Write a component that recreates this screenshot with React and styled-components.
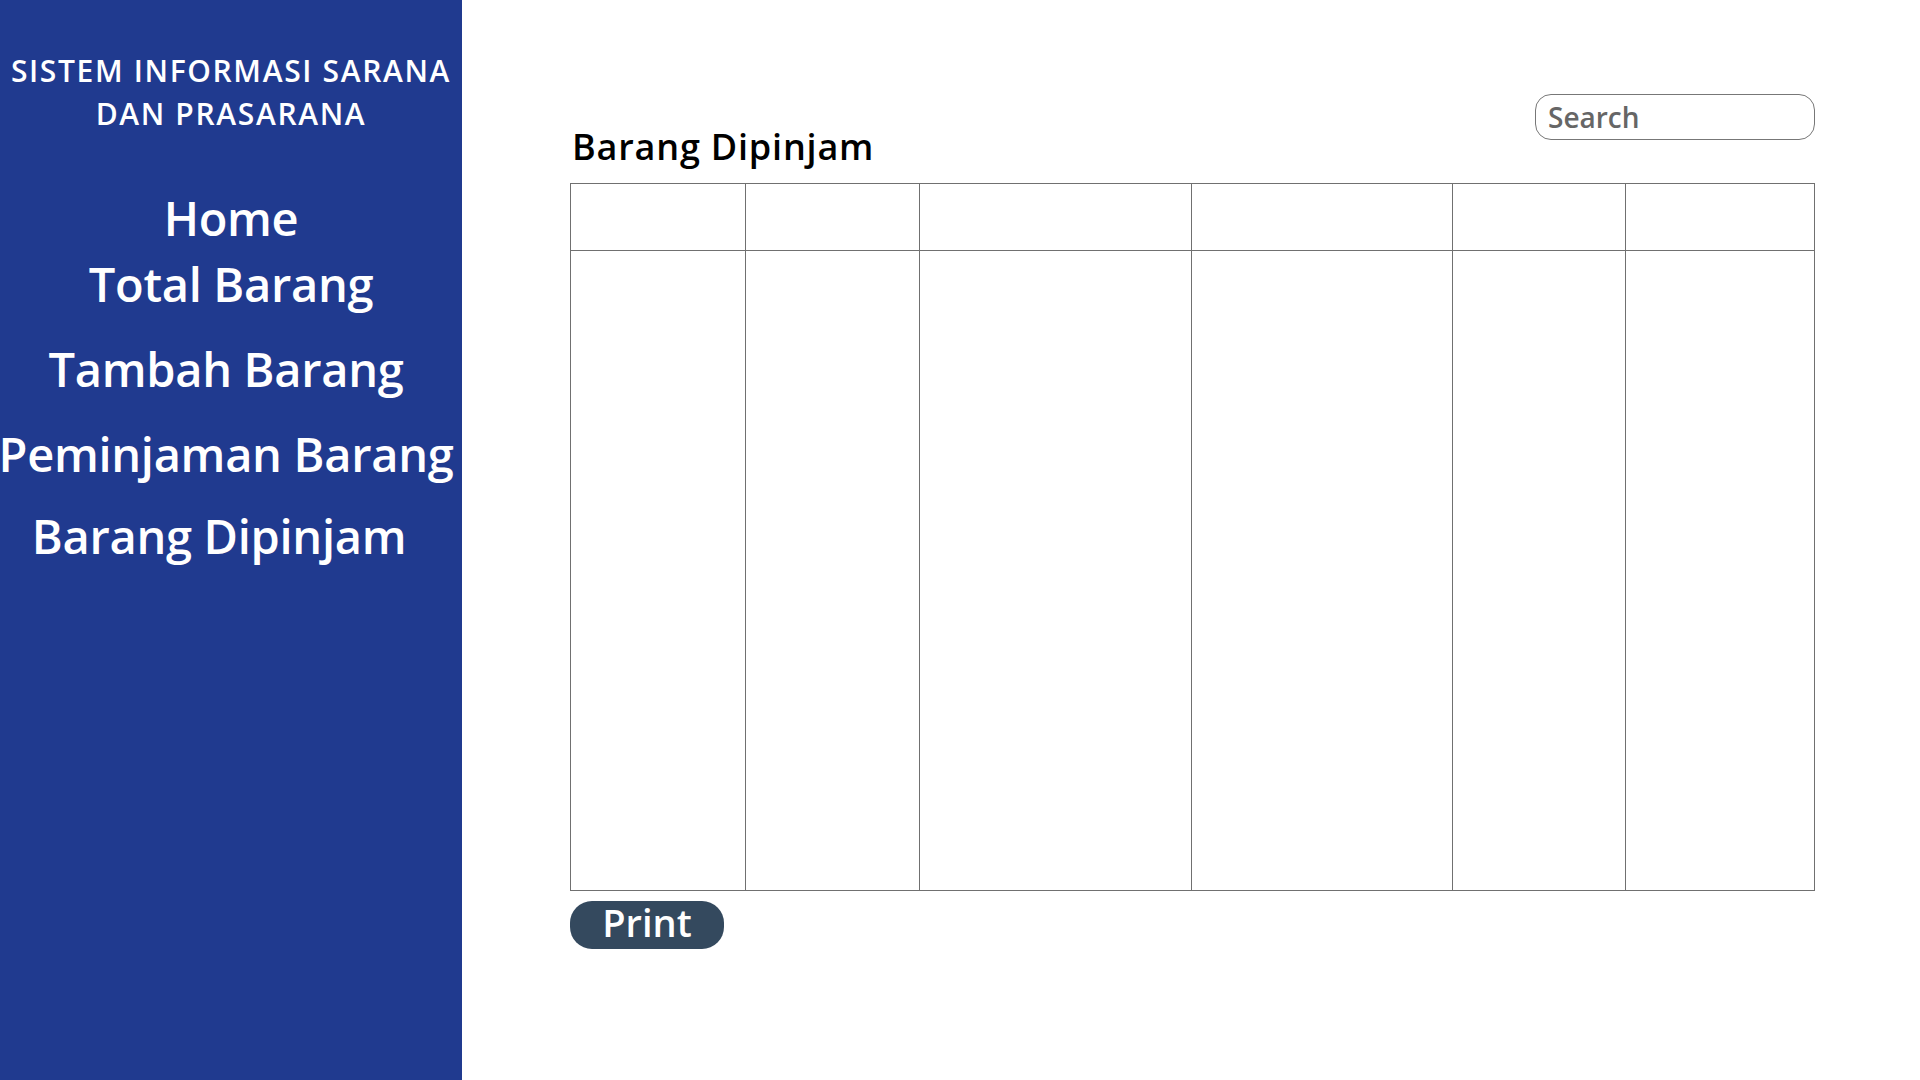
import React from 'react';
import styled, { createGlobalStyle } from 'styled-components';

const GlobalStyle = createGlobalStyle`
    body {
        margin: 0;
        font-family: "Open Sans", "Noto Sans", sans-serif;
        background: #fff;
    }
`

const Page = styled.div`
    display: flex;
    width: 1920px;
    height: 1080px;
    overflow: hidden;
`

const Sidebar = styled.aside`
    width: 462px;
    flex-shrink: 0;
    background-color: #203a8f;
    color: #fff;
    display: flex;
    flex-direction: column;
    align-items: center;
    padding-top: 49px;
    box-sizing: border-box;
`

const AppTitle = styled.h1`
    margin: 0;
    font-size: 30px;
    line-height: 43px;
    font-weight: 600;
    letter-spacing: 0.055em;
    text-align: center;
    white-space: nowrap;
`

const Nav = styled.nav`
    display: flex;
    flex-direction: column;
    align-items: center;
    margin-top: 52px;
`

const NavItem = styled.a`
    font-size: 47px;
    line-height: 63px;
    font-weight: 600;
    letter-spacing: -0.3px;
    white-space: nowrap;
    color: #fff;
    text-decoration: none;
    margin-top: ${(props) => props.$gap || 0}px;
    margin-right: ${(props) => props.$shift || 0}px;
    cursor: pointer;
`

const Main = styled.main`
    flex: 1;
    display: flex;
    flex-direction: column;
    padding: 94px 105px 0 108px;
    box-sizing: border-box;
`

const Header = styled.div`
    display: flex;
    justify-content: space-between;
    align-items: flex-start;
`

const Heading = styled.h2`
    margin: 31px 0 0 2px;
    font-size: 36px;
    line-height: 43px;
    font-weight: 600;
    letter-spacing: 0.8px;
    color: #000;
`

const Search = styled.input`
    width: 280px;
    height: 46px;
    box-sizing: border-box;
    border: 1px solid #777;
    border-radius: 16px;
    padding: 0 12px;
    font-family: "Open Sans", "Noto Sans", sans-serif;
    font-size: 28px;
    font-weight: 600;
    color: #666;
    outline: none;
    &::placeholder {
        color: #666;
    }
`

const Table = styled.div`
    display: grid;
    grid-template-columns: 175px 174px 272px 261px 173px 1fr;
    grid-template-rows: 67px 640px;
    margin-top: 15px;
    border-left: 1px solid #707070;
    border-top: 1px solid #707070;
`

const Cell = styled.div`
    border-right: 1px solid #707070;
    border-bottom: 1px solid #707070;
`

const PrintButton = styled.button`
    align-self: flex-start;
    margin-top: 10px;
    width: 154px;
    height: 48px;
    border: none;
    border-radius: 22px;
    background-color: #34495e;
    color: #fff;
    font-family: "Open Sans", "Noto Sans", sans-serif;
    font-size: 38px;
    font-weight: 600;
    line-height: 42px;
    padding: 0 0 6px;
    cursor: pointer;
`

const columns = 6;

const App = () => {
    return (
        <Page>
            <GlobalStyle />
            <Sidebar>
                <AppTitle>SISTEM INFORMASI SARANA<br />DAN PRASARANA</AppTitle>
                <Nav>
                    <NavItem>Home</NavItem>
                    <NavItem $gap={3}>Total Barang</NavItem>
                    <NavItem $gap={22} $shift={10}>Tambah Barang</NavItem>
                    <NavItem $gap={22} $shift={10}>Peminjaman Barang</NavItem>
                    <NavItem $gap={19} $shift={24}>Barang Dipinjam</NavItem>
                </Nav>
            </Sidebar>
            <Main>
                <Header>
                    <Heading>Barang Dipinjam</Heading>
                    <Search type='text' placeholder='Search' />
                </Header>
                <Table>
                    {Array.from({ length: columns * 2 }).map((_, i) => (
                        <Cell key={i} />
                    ))}
                </Table>
                <PrintButton>Print</PrintButton>
            </Main>
        </Page>
    )
}

export default App;
